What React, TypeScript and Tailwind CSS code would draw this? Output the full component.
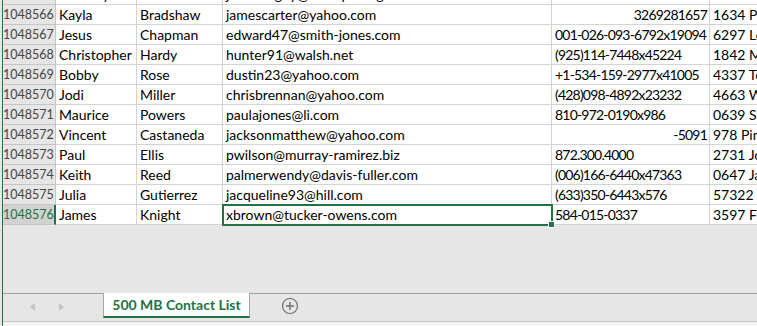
const rows = [
  { n: 1048565, first: "Timothy", last: "Lewis", email: "johnsonguy@example.org", phone: "", right: false, addr: "" },
  { n: 1048566, first: "Kayla", last: "Bradshaw", email: "jamescarter@yahoo.com", phone: "3269281657", right: true, addr: "1634 Patricia Lane" },
  { n: 1048567, first: "Jesus", last: "Chapman", email: "edward47@smith-jones.com", phone: "001-026-093-6792x19094", right: false, addr: "6297 Lee Rapids" },
  { n: 1048568, first: "Christopher", last: "Hardy", email: "hunter91@walsh.net", phone: "(925)114-7448x45224", right: false, addr: "1842 Mark Road" },
  { n: 1048569, first: "Bobby", last: "Rose", email: "dustin23@yahoo.com", phone: "+1-534-159-2977x41005", right: false, addr: "4337 Torres Way" },
  { n: 1048570, first: "Jodi", last: "Miller", email: "chrisbrennan@yahoo.com", phone: "(428)098-4892x23232", right: false, addr: "4663 Williams Court" },
  { n: 1048571, first: "Maurice", last: "Powers", email: "paulajones@li.com", phone: "810-972-0190x986", right: false, addr: "0639 Sarah Ports" },
  { n: 1048572, first: "Vincent", last: "Castaneda", email: "jacksonmatthew@yahoo.com", phone: "-5091", right: true, addr: "978 Pine Street" },
  { n: 1048573, first: "Paul", last: "Ellis", email: "pwilson@murray-ramirez.biz", phone: "872.300.4000", right: false, addr: "2731 Johnson Manor" },
  { n: 1048574, first: "Keith", last: "Reed", email: "palmerwendy@davis-fuller.com", phone: "(006)166-6440x47363", right: false, addr: "0647 James Isle" },
  { n: 1048575, first: "Julia", last: "Gutierrez", email: "jacqueline93@hill.com", phone: "(633)350-6443x576", right: false, addr: "57322 King Lodge" },
  { n: 1048576, first: "James", last: "Knight", email: "xbrown@tucker-owens.com", phone: "584-015-0337", right: false, addr: "3597 Flores Lane" },
];

const SELECTED = 1048576;

function Row({ r }: { r: (typeof rows)[number] }) {
  const sel = r.n === SELECTED;
  const cell = "h-[20px] border-b border-r border-[#d4d4d4] bg-white pl-[3px] pr-[2px] whitespace-nowrap overflow-hidden leading-[19px]";
  return (
    <div className="flex h-[20px] text-[14px] text-black">
      <div
        className={
          sel
            ? "w-[53px] shrink-0 h-[20px] border-b border-b-[#c6c6c6] border-r-2 border-r-[#217346] bg-[#d2d2d2] text-[#217346] text-[12.5px] leading-[19px] text-right pr-[1px]"
            : "w-[53px] shrink-0 h-[20px] border-b border-r border-[#c6c6c6] bg-[#e6e6e6] text-[#444444] text-[12.5px] leading-[19px] text-right pr-[2px]"
        }
      >
        {r.n}
      </div>
      <div className={`${cell} w-[81px] shrink-0`}>{r.first}</div>
      <div className={`${cell} w-[86px] shrink-0`}>{r.last}</div>
      <div className={`${cell} w-[329px] shrink-0 relative overflow-visible`}>
        {r.email}
        {sel && (
          <>
            <div className="absolute left-[-1px] top-[-1px] w-[331px] h-[22px] border-2 border-[#217346]" />
            <div className="absolute left-[325px] top-[16px] w-[7px] h-[7px] bg-[#217346] border border-white" />
          </>
        )}
      </div>
      <div className={`${cell} w-[158px] shrink-0 tracking-[-0.8px] ${r.right ? "text-right" : ""}`}>{r.phone}</div>
      <div className={`${cell} flex-1 min-w-0 border-r-0`}>{r.addr}</div>
    </div>
  );
}

export default function App() {
  return (
    <div className="w-[757px] h-[326px] overflow-hidden bg-[#e6e6e6] flex font-['Lato',sans-serif]">
      <div className="w-[2px] shrink-0 bg-[#e6e6e6]" />
      <div className="w-[1px] shrink-0 bg-[#217346]" />
      <div className="flex-1 min-w-0 flex flex-col">
        <div className="mt-[-15px] flex flex-col">
          {rows.map((r) => (
            <Row key={r.n} r={r} />
          ))}
        </div>
        <div className="flex-1" />
        <div className="h-[29px] shrink-0 border-t border-b border-t-[#9f9f9f] border-b-[#c8c8c8] flex items-start">
          <div className="w-[100px] shrink-0 flex items-center pl-[27px] gap-[24px] mt-[9px]">
            <svg width="5" height="8" viewBox="0 0 5 8">
              <path d="M5 0 L0 4 L5 8 Z" fill="#c3c3c3" />
            </svg>
            <svg width="5" height="8" viewBox="0 0 5 8">
              <path d="M0 0 L5 4 L0 8 Z" fill="#c3c3c3" />
            </svg>
          </div>
          <div className="mt-[-1px] w-[147px] h-[25px] shrink-0 bg-white border-l border-r border-[#a6a6a6] border-b-2 border-b-[#217346] flex items-center justify-center text-[14px] font-bold text-[#217346]">
            500 MB Contact List
          </div>
          <div className="ml-[31px] mt-[3px]">
            <svg width="18" height="18" viewBox="0 0 18 18">
              <circle cx="9" cy="9" r="7.5" fill="none" stroke="#6e6e6e" strokeWidth="1.2" />
              <path d="M9 5 V13 M5 9 H13" stroke="#6e6e6e" strokeWidth="1.4" />
            </svg>
          </div>
        </div>
        <div className="h-[4px] shrink-0 bg-[#f3f3f3]" />
      </div>
    </div>
  );
}
